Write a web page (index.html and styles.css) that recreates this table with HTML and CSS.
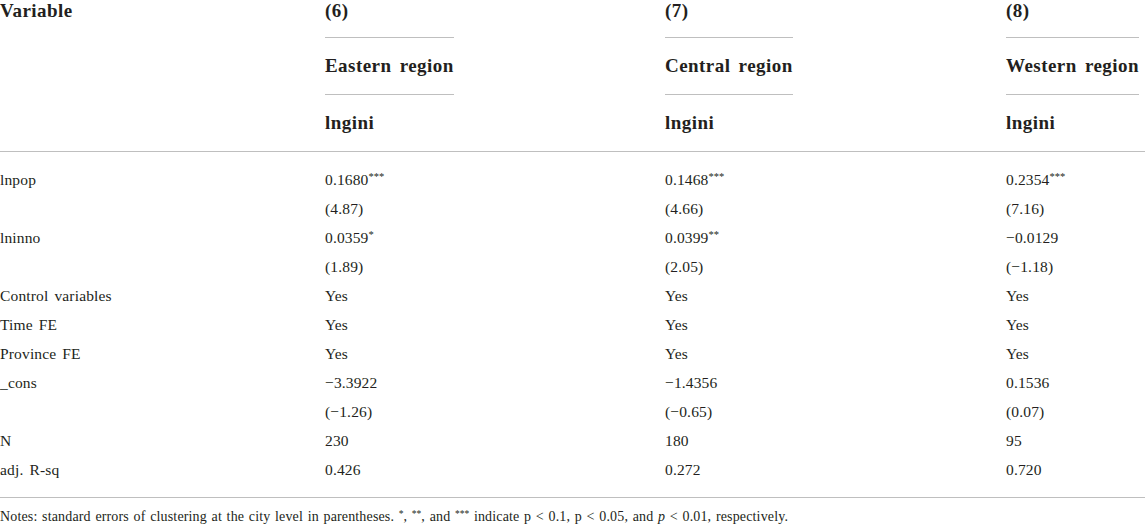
FILE: index.html
```html
<!DOCTYPE html>
<html lang="en">
<head>
<meta charset="utf-8">
<title>Regional regression results</title>
<link rel="stylesheet" href="styles.css">
</head>
<body>
<div class="table">
  <div class="head">
    <div class="var-head">Variable</div>
    <div class="col-head">
      <div class="stack">
        <div class="h h-top">(6)</div>
        <div class="h h-mid">Eastern region</div>
        <div class="h h-bot">lngini</div>
      </div>
    </div>
    <div class="col-head">
      <div class="stack">
        <div class="h h-top">(7)</div>
        <div class="h h-mid">Central region</div>
        <div class="h h-bot">lngini</div>
      </div>
    </div>
    <div class="col-head">
      <div class="stack">
        <div class="h h-top">(8)</div>
        <div class="h h-mid">Western region</div>
        <div class="h h-bot">lngini</div>
      </div>
    </div>
  </div>
  <div class="body">
    <div class="row"><span>lnpop</span><span>0.1680<sup>***</sup></span><span>0.1468<sup>***</sup></span><span>0.2354<sup>***</sup></span></div>
    <div class="row"><span></span><span>(4.87)</span><span>(4.66)</span><span>(7.16)</span></div>
    <div class="row"><span>lninno</span><span>0.0359<sup>*</sup></span><span>0.0399<sup>**</sup></span><span>−0.0129</span></div>
    <div class="row"><span></span><span>(1.89)</span><span>(2.05)</span><span>(−1.18)</span></div>
    <div class="row"><span>Control variables</span><span>Yes</span><span>Yes</span><span>Yes</span></div>
    <div class="row"><span>Time FE</span><span>Yes</span><span>Yes</span><span>Yes</span></div>
    <div class="row"><span>Province FE</span><span>Yes</span><span>Yes</span><span>Yes</span></div>
    <div class="row"><span>_cons</span><span>−3.3922</span><span>−1.4356</span><span>0.1536</span></div>
    <div class="row"><span></span><span>(−1.26)</span><span>(−0.65)</span><span>(0.07)</span></div>
    <div class="row"><span>N</span><span>230</span><span>180</span><span>95</span></div>
    <div class="row"><span>adj. R-sq</span><span>0.426</span><span>0.272</span><span>0.720</span></div>
  </div>
  <p class="notes">Notes: standard errors of clustering at the city level in parentheses. <sup>*</sup>, <sup>**</sup>, and <sup>***</sup> indicate p &lt; 0.1, p &lt; 0.05, and <i>p</i> &lt; 0.01, respectively.</p>
</div>
</body>
</html>
```

FILE: styles.css
```css
html, body {
  margin: 0;
  padding: 0;
  background: #ffffff;
}

body {
  font-family: "Liberation Serif", "Times New Roman", serif;
  color: #231f20;
  width: 1145px;
  overflow: hidden;
}

.table {
  width: 1145px;
}

.head {
  display: grid;
  grid-template-columns: 325px 340px 341px 139px;
  border-bottom: 1px solid #bfbfbf;
  font-family: "Liberation Serif", serif;
  font-weight: 700;
  font-size: 19px;
  line-height: 22px;
  letter-spacing: 0.45px;
  word-spacing: 3px;
}

.col-head {
  display: flex;
  white-space: nowrap;
}

.stack {
  display: flex;
  flex-direction: column;
}

.h-top {
  padding: 0 0 15px;
  border-bottom: 1px solid #bfbfbf;
}

.h-mid {
  padding: 17px 0;
  border-bottom: 1px solid #bfbfbf;
}

.h-bot {
  padding: 17px 0;
}

.body {
  padding: 13px 0;
  border-bottom: 1px solid #bfbfbf;
  font-size: 15.5px;
  letter-spacing: 0.15px;
  word-spacing: 2px;
}

.row {
  display: grid;
  grid-template-columns: 325px 340px 341px 139px;
  height: 29px;
  align-items: center;
  white-space: nowrap;
}

.row sup,
.notes sup {
  font-size: 0.68em;
  line-height: 0;
  vertical-align: 0.45em;
  letter-spacing: 0;
}

.notes {
  margin: 0;
  padding-top: 9px;
  font-size: 14px;
  line-height: 20px;
  letter-spacing: 0.15px;
  word-spacing: 1px;
  white-space: nowrap;
}
```
